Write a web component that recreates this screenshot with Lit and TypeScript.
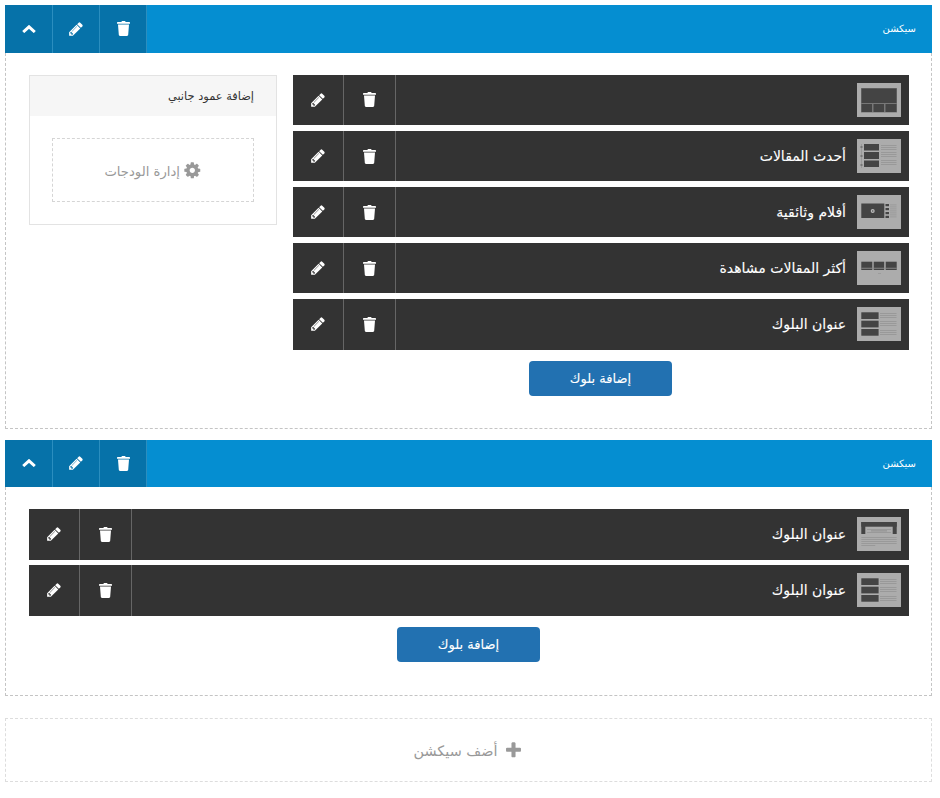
import { LitElement, html, css, svg } from "lit";
import { customElement, property } from "lit/decorators.js";

const PENCIL = "M491 1536l91-91-235-235-91 91v107h128v128h107zm523-928q0-22-22-22-10 0-17 7l-542 542q-7 7-7 17 0 22 22 22 10 0 17-7l542-542q7-7 7-17zm-54-192l416 416-832 832h-416v-416zm683 96q0 53-37 90l-166 166-416-416 166-165q36-38 90-38 53 0 91 38l235 234q37 39 37 91z";
const COG = "M1152 896q0-106-75-181t-181-75-181 75-75 181 75 181 181 75 181-75 75-181zm512-109v222q0 12-8 23t-20 13l-185 28q-19 54-39 91 35 50 107 138 10 12 10 25t-9 23q-27 37-99 108t-94 71q-12 0-26-9l-138-108q-44 23-91 38-16 136-29 186-7 28-36 28h-222q-14 0-24.5-8.5t-11.5-21.5l-28-184q-49-16-90-37l-141 107q-10 9-25 9-14 0-25-11-126-114-165-168-7-10-7-23 0-12 8-23 15-21 51-66.5t54-70.5q-27-50-41-99l-183-27q-13-2-21-12.5t-8-23.5v-222q0-12 8-23t19-13l186-28q14-46 39-92-40-57-107-138-10-12-10-24 0-10 9-23 26-36 98.5-107.5t94.5-71.5q13 0 26 10l138 107q44-23 91-38 16-136 29-186 7-28 36-28h222q14 0 24.5 8.5t11.5 21.5l28 184q49 16 90 37l142-107q9-9 24-9 13 0 25 10 129 119 165 170 7 8 7 22 0 12-8 23-15 21-51 66.5t-54 70.5q26 50 41 98l183 28q13 2 21 12.5t8 23.5z";
const PLUS = "M1600 736v192q0 40-28 68t-68 28h-416v416q0 40-28 68t-68 28h-192q-40 0-68-28t-28-68v-416h-416q-40 0-68-28t-28-68v-192q0-40 28-68t68-28h416v-416q0-40 28-68t68-28h192q40 0 68 28t28 68v416h416q40 0 68 28t28 68z";

const pencilIcon = html`<svg class="ic-pencil" viewBox="0 0 1792 1792"><path fill="currentColor" d=${PENCIL}></path></svg>`;
const trashIcon = html`<svg class="ic-trash" viewBox="0 0 13 15"><path fill="currentColor" d="M4.4 1.1 4.9 0h3.2l.5 1.1h3.7c.4 0 .7.3.7.7v.9H0v-.9c0-.4.3-.7.7-.7zM1 3.6h11l-.8 10.2c-.1.7-.5 1.2-1.2 1.2H3c-.7 0-1.1-.5-1.2-1.2z"></path></svg>`;
const chevronIcon = html`<svg class="ic-chevron" viewBox="0 0 14 8"><path fill="none" stroke="currentColor" stroke-width="3" d="M1.2 7 7 1.8 12.8 7"></path></svg>`;

type R = [number, number, number, number];
const rects = (list: R[], fill: string) =>
  list.map(([x, y, w, h]) => svg`<rect x=${x} y=${y} width=${w} height=${h} fill=${fill}></rect>`);
const lines = (x: number, w: number, ys: number[], fill = "#959595") =>
  ys.map((y) => svg`<rect x=${x} y=${y} width=${w} height="0.8" fill=${fill}></rect>`);

const DARK = "#444";
const THUMBS: Record<string, unknown> = {
  grid: svg`${rects([[4, 5, 36, 24.5]], "#777")}${rects([[4.5, 5.5, 35, 14.5], [4.5, 21, 10.5, 8], [16.5, 21, 10.5, 8], [28.5, 21, 11, 8]], DARK)}`,
  list: svg`${rects([[4, 5, 0.8, 24]], "#959595")}${rects([[3.5, 7, 2, 2], [3.5, 16, 2, 2], [3.5, 25, 2, 2]], "#777")}${rects([[7, 5, 15, 6.5], [7, 13, 15, 7], [7, 21.5, 15, 6.5]], DARK)}${lines(24, 15.5, [6, 8, 10, 13, 15, 17, 21, 23, 25])}`,
  video: svg`${rects([[4.3, 8.5, 23, 14.5]], DARK)}<circle cx="15.7" cy="16" r="2" fill="#bbb"></circle><circle cx="15.7" cy="16" r="0.8" fill="#555"></circle>${rects([[28.5, 9, 3.5, 2.2], [28.5, 13, 3.5, 2.2], [28.5, 17, 3.5, 2.2], [28.5, 20.8, 3.5, 2.2]], DARK)}${lines(33, 6.5, [9.5, 11.5, 13.5, 15.5, 17.5, 19.5, 21.5])}`,
  cols: svg`${rects([[4.3, 10.7, 11, 8.3], [16.7, 10.7, 10.5, 8.3], [28.7, 10.7, 11, 8.3]], DARK)}${lines(4.3, 11, [16.8])}${lines(16.7, 10.5, [16.8])}${lines(28.7, 11, [16.8])}${rects([[21, 22, 3, 0.8]], "#999")}`,
  article: svg`${rects([[4.3, 5.3, 17.3, 6.7], [4.3, 13.7, 17.3, 6.7], [4.3, 22, 17.3, 6.7]], DARK)}${lines(23, 16.5, [6, 8, 10, 14, 16, 18, 23, 25, 27])}`,
  hero: svg`${rects([[4.3, 5, 35.4, 4.7], [4.3, 5, 4, 12], [35.7, 5, 4, 12]], DARK)}${lines(10, 24, [12, 15])}${rects([[14, 13.5, 16, 0.8]], "#888")}${lines(4.3, 35.4, [20, 22, 24, 26])}${lines(4.3, 14, [28])}`,
};

@customElement("blk-thumb")
class BlkThumb extends LitElement {
  @property() kind = "grid";
  static styles = css`
    :host { display: block; width: 44px; height: 34px; flex: none; }
    svg { display: block; width: 44px; height: 34px; background: #acacac; }
  `;
  render() {
    return html`<svg viewBox="0 0 44 34">${THUMBS[this.kind]}</svg>`;
  }
}

interface Block { kind: string; title: string; }

@customElement("app-root")
class AppRoot extends LitElement {
  static styles = css`
    :host {
      display: block;
      width: 940px;
      min-height: 798px;
      background: #fff;
      font-family: "DejaVu Sans", sans-serif;
    }
    .page {
      direction: rtl;
      padding: 5px 8px 16px 5px;
      box-sizing: border-box;
      display: flex;
      flex-direction: column;
    }
    .section { margin-bottom: 10.3px; }
    .section.s2 { margin-bottom: 22px; }
    .head {
      height: 47.8px;
      background: #058ed1;
      display: flex;
      align-items: center;
      color: #fff;
      font-size: 10px;
    }
    .s2 .head { height: 47.55px; }
    .head-title { padding-right: 16px; flex: 1; }
    .hbtn {
      width: 47px;
      height: 100%;
      box-sizing: border-box;
      background: #0672a9;
      border-right: 1px solid #2b8ebf;
      display: flex;
      align-items: center;
      justify-content: center;
      color: #fff;
      flex: none;
    }
    .hbtn:last-child { width: 48px; }
    .body {
      border: 1px dashed #c4c4c4;
      border-top: 0;
      padding: 22px 22px 32.5px 23px;
      display: flex;
      gap: 16px;
      align-items: flex-start;
    }
    .blocks {
      flex: 1;
      display: flex;
      flex-direction: column;
      align-items: center;
      min-width: 0;
    }
    .row {
      align-self: stretch;
      height: 50.4px;
      margin-bottom: 5.7px;
      background: #333;
      display: flex;
      align-items: center;
      color: #fff;
      font-size: 14px;
    }
    .row blk-thumb { margin-right: 8px; }
    .row-title {
      flex: 1;
      padding-right: 11px;
      padding-bottom: 1px;
      -webkit-text-stroke: 0.1px #fff;
    }
    .rbtn {
      height: 100%;
      border-right: 1px solid #666;
      box-sizing: border-box;
      display: flex;
      align-items: center;
      justify-content: center;
      flex: none;
    }
    .rbtn.trash { width: 52px; }
    .rbtn.edit { width: 51px; }
    .add-btn {
      width: 143px;
      height: 35px;
      margin-top: 5.7px;
      margin-right: 1px;
      background: #2271b1;
      border-radius: 4px;
      color: #fff;
      font-size: 13px;
      -webkit-text-stroke: 0.1px #fff;
      display: flex;
      align-items: center;
      justify-content: center;
      box-sizing: border-box;
    }
    .side {
      width: 248px;
      flex: none;
      border: 1px solid #e3e3e3;
      box-sizing: border-box;
      height: 150px;
    }
    .side-head {
      height: 40px;
      background: #f6f6f6;
      display: flex;
      align-items: center;
      padding-right: 22px;
      font-size: 11.4px;
      color: #333;
    }
    .side-body { padding: 22px; }
    .widgets {
      height: 64px;
      box-sizing: border-box;
      border: 1px dashed #d5d5d5;
      display: flex;
      align-items: center;
      justify-content: center;
      gap: 3px;
      color: #999;
      font-size: 13.2px;
    }
    .widgets span { padding-top: 3px; }
    .add-section {
      height: 64px;
      box-sizing: border-box;
      border: 1px dashed #ddd;
      display: flex;
      align-items: center;
      justify-content: center;
      gap: 7px;
      color: #999;
      font-size: 14.4px;
    }
    .add-section span { padding-top: 2px; }
    svg { display: block; flex: none; }
    .ic-pencil { width: 16px; height: 16px; }
    .ic-trash { width: 13px; height: 15px; }
    .ic-chevron { width: 14px; height: 8px; }
    .ic-cog { width: 18.6px; height: 18.6px; }
    .ic-plus { width: 19px; height: 19px; margin-top: 2px; }
  `;

  private renderRow(b: Block) {
    return html`<div class="row">
      <blk-thumb kind=${b.kind}></blk-thumb>
      <div class="row-title">${b.title}</div>
      <div class="rbtn trash">${trashIcon}</div>
      <div class="rbtn edit">${pencilIcon}</div>
    </div>`;
  }

  private renderHead() {
    return html`<div class="head">
      <div class="head-title">سيكشن</div>
      <div class="hbtn">${trashIcon}</div>
      <div class="hbtn">${pencilIcon}</div>
      <div class="hbtn">${chevronIcon}</div>
    </div>`;
  }

  render() {
    const first: Block[] = [
      { kind: "grid", title: "" },
      { kind: "list", title: "أحدث المقالات" },
      { kind: "video", title: "أفلام وثائقية" },
      { kind: "cols", title: "أكثر المقالات مشاهدة" },
      { kind: "article", title: "عنوان البلوك" },
    ];
    const second: Block[] = [
      { kind: "hero", title: "عنوان البلوك" },
      { kind: "article", title: "عنوان البلوك" },
    ];
    return html`<div class="page">
      <div class="section">
        ${this.renderHead()}
        <div class="body">
          <div class="blocks">
            ${first.map((b) => this.renderRow(b))}
            <div class="add-btn">إضافة بلوك</div>
          </div>
          <div class="side">
            <div class="side-head">إضافة عمود جانبي</div>
            <div class="side-body">
              <div class="widgets">
                <svg class="ic-cog" viewBox="0 0 1792 1792"><path fill="currentColor" d=${COG}></path></svg>
                <span>إدارة الودجات</span>
              </div>
            </div>
          </div>
        </div>
      </div>
      <div class="section s2">
        ${this.renderHead()}
        <div class="body">
          <div class="blocks">
            ${second.map((b) => this.renderRow(b))}
            <div class="add-btn">إضافة بلوك</div>
          </div>
        </div>
      </div>
      <div class="add-section">
        <svg class="ic-plus" viewBox="0 0 1792 1792"><path fill="currentColor" d=${PLUS}></path></svg>
        <span>أضف سيكشن</span>
      </div>
    </div>`;
  }
}
